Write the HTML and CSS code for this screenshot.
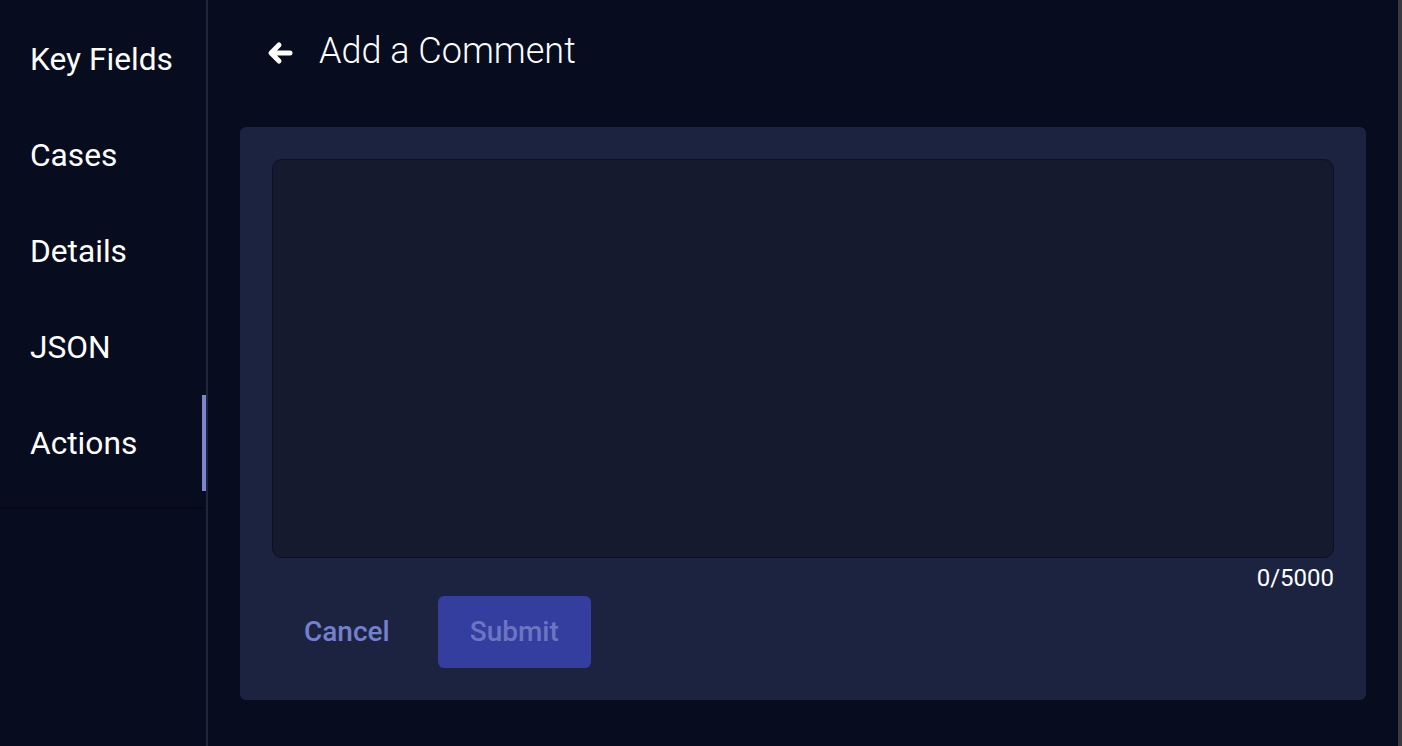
FILE: index.html
```html
<!DOCTYPE html>
<html lang="en">
<head>
<meta charset="utf-8">
<title>Add a Comment</title>
<link rel="stylesheet" href="styles.css">
</head>
<body>
<div class="app">
  <nav class="sidebar">
    <ul class="nav-list">
      <li class="nav-item">Key Fields</li>
      <li class="nav-item">Cases</li>
      <li class="nav-item">Details</li>
      <li class="nav-item">JSON</li>
      <li class="nav-item active">Actions</li>
    </ul>
  </nav>
  <main class="main">
    <header class="header">
      <svg class="back" width="26" height="26" viewBox="0 0 26 26" aria-hidden="true">
        <path d="M23 13 H5 M12 5 L4 13 L12 21" fill="none" stroke="#ffffff" stroke-width="5" stroke-linecap="round" stroke-linejoin="round"/>
      </svg>
      <h1 class="title">Add a Comment</h1>
    </header>
    <section class="card">
      <div class="textarea"></div>
      <div class="counter">0/5000</div>
      <div class="actions">
        <button class="btn btn-cancel">Cancel</button>
        <button class="btn btn-submit">Submit</button>
      </div>
    </section>
  </main>
  <div class="scrollbar"></div>
</div>
</body>
</html>
```
FILE: styles.css
```css
* { box-sizing: border-box; }
html, body {
  margin: 0;
  padding: 0;
  height: 100%;
  background: #070c1f;
  font-family: Roboto, "Liberation Sans", sans-serif;
  color: #ffffff;
}
.app {
  display: flex;
  height: 746px;
  overflow: hidden;
}
.sidebar {
  width: 208px;
  flex: 0 0 208px;
  border-right: 2px solid #20253a;
  background: #070c1f;
}
.nav-list {
  list-style: none;
  margin: 0;
  padding: 11px 0 16px;
  border-bottom: 2px solid #040816;
  margin-right: 3px;
}
.nav-item {
  height: 96px;
  padding-top: 2px;
  line-height: 94px;
  font-size: 31.7px;
  padding-left: 30px;
  position: relative;
  margin-right: -3px;
}
.nav-item.active::after {
  content: "";
  position: absolute;
  right: 0;
  top: 0;
  width: 4px;
  height: 96px;
  background: #7b85d2;
}
.main {
  flex: 1;
  padding: 31px 32px 0 32px;
  display: flex;
  flex-direction: column;
}
.header {
  display: flex;
  align-items: center;
  height: 40px;
  padding-left: 27px;
  margin-bottom: 56px;
}
.back {
  display: block;
  margin-right: 26px;
  margin-top: 4px;
}
.title {
  margin: 0;
  font-size: 36px;
  font-weight: 300;
  line-height: 40px;
}
.card {
  background: #1c2341;
  border-radius: 6px;
  padding: 32px 32px 32px;
  display: flex;
  flex-direction: column;
}
.textarea {
  height: 399px;
  background: #151a2e;
  border: 1px solid #0d1020;
  border-radius: 10px;
}
.counter {
  align-self: flex-end;
  font-size: 24px;
  line-height: 28px;
  margin-top: 6px;
}
.actions {
  display: flex;
  gap: 16px;
  margin-top: 4px;
}
.btn {
  font-family: Roboto, "Liberation Sans", sans-serif;
  font-size: 28px;
  font-weight: 500;
  height: 72px;
  padding: 0 32px 2px;
  border: none;
  border-radius: 6px;
  background: transparent;
  cursor: pointer;
}
.btn-cancel {
  color: #7480cc;
}
.btn-submit {
  background: #343e9f;
  color: #6b76c2;
}
.scrollbar {
  width: 4px;
  flex: 0 0 4px;
  background: #3a3a3a;
}
```
